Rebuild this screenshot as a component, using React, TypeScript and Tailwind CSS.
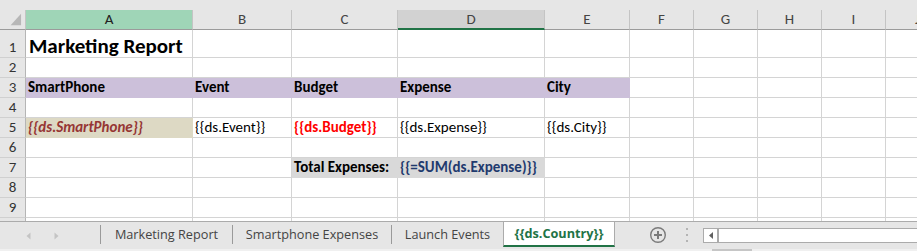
import clsx from "clsx";
import type { ReactNode } from "react";

type Col = { key: string; w: string; head: string };

const cols: Col[] = [
  { key: "A", w: "w-[167px]", head: "bg-[#9fd5b7] text-[#222]" },
  { key: "B", w: "w-[99px]", head: "text-[#444]" },
  { key: "C", w: "w-[106px]", head: "text-[#444]" },
  { key: "D", w: "w-[147px]", head: "bg-[#d2d2d2] border-b-2 border-b-[#217346] text-[#444]" },
  { key: "E", w: "w-[85px]", head: "text-[#444]" },
  { key: "F", w: "w-[64px]", head: "text-[#444]" },
  { key: "G", w: "w-[64px]", head: "text-[#444]" },
  { key: "H", w: "w-[64px]", head: "text-[#444]" },
  { key: "I", w: "w-[64px]", head: "text-[#444]" },
  { key: "J", w: "w-[64px]", head: "text-[#444]" },
];

type CellSpec = { text?: ReactNode; cls?: string; fill?: string };
type RowSpec = { n: number; h: string; cells: Record<string, CellSpec> };

const purple = "bg-[#ccc0da] border-[#ccc0da]";
const grey = "bg-[#d9d9d9] border-[#d9d9d9]";

const rows: RowSpec[] = [
  {
    n: 1,
    h: "h-[28px]",
    cells: { A: { text: "Marketing Report", cls: "text-[21px] font-bold pl-[3px] pb-[2px] text-black" } },
  },
  { n: 2, h: "h-[20px]", cells: {} },
  {
    n: 3,
    h: "h-[20px]",
    cells: {
      A: { text: "SmartPhone", cls: "font-bold text-black", fill: purple },
      B: { text: "Event", cls: "font-bold text-black", fill: purple },
      C: { text: "Budget", cls: "font-bold text-black", fill: purple },
      D: { text: "Expense", cls: "font-bold text-black", fill: purple },
      E: { text: "City", cls: "font-bold text-black", fill: purple },
    },
  },
  { n: 4, h: "h-[20px]", cells: {} },
  {
    n: 5,
    h: "h-[20px]",
    cells: {
      A: { text: "{{ds.SmartPhone}}", cls: "font-bold italic text-[#963634]", fill: "bg-[#ddd9c4] border-[#ddd9c4]" },
      B: { text: "{{ds.Event}}", cls: "text-black" },
      C: { text: "{{ds.Budget}}", cls: "font-bold text-[#ff0000]" },
      D: { text: "{{ds.Expense}}", cls: "text-black" },
      E: { text: "{{ds.City}}", cls: "text-black" },
    },
  },
  { n: 6, h: "h-[20px]", cells: {} },
  {
    n: 7,
    h: "h-[20px]",
    cells: {
      C: { text: "Total Expenses:", cls: "font-bold text-black", fill: grey },
      D: { text: "{{=SUM(ds.Expense)}}", cls: "font-bold text-[#1f3a6e]", fill: grey },
    },
  },
  { n: 8, h: "h-[20px]", cells: {} },
  { n: 9, h: "h-[20px]", cells: {} },
];

function Corner() {
  return (
    <div className="h-full w-[26px] shrink-0 border-r border-b border-r-[#c4c4c4] border-b-[#9b9b9b]">
      <svg aria-hidden="true" className="h-full w-full" viewBox="0 0 26 20">
        <path d="M22 4 L22 16 L11 16 Z" fill="#b7b7b7" />
      </svg>
    </div>
  );
}

function SheetRow({ row }: { row: RowSpec }) {
  return (
    <div className={clsx("flex shrink-0", row.h)}>
      <div className="flex w-[26px] shrink-0 items-end justify-center border-r border-b border-r-[#b5b5b5] border-b-[#d0d0d0] bg-[#e6e6e6] pb-[1px] text-[15px] leading-[18px] text-[#333]">
        {row.n}
      </div>
      {cols.map((c) => {
        const cell = row.cells[c.key];
        return (
          <div
            className={clsx(
              "flex shrink-0 items-end overflow-hidden whitespace-nowrap border-r border-b px-[2px] pb-[1px] text-[15px] leading-[18px]",
              c.w,
              cell?.fill ?? "border-[#d4d4d4] bg-white",
              cell?.cls,
            )}
            key={c.key}
          >
            {cell?.text}
          </div>
        );
      })}
    </div>
  );
}

function TabSep() {
  return <div className="mt-[3px] h-[19px] w-px shrink-0 bg-[#9a9a9a]" />;
}

function Tab({ label, w }: { label: string; w: string }) {
  return (
    <div className={clsx("flex h-[25px] shrink-0 items-center justify-center text-[12.7px] text-[#444]", w)}>{label}</div>
  );
}

export default function App() {
  return (
    <div className="flex h-[251px] w-[917px] flex-col overflow-hidden bg-[#e6e6e6] font-['Calibri','Carlito','Lato',sans-serif]">
      <div className="h-[10px] shrink-0" />
      <div className="flex h-[20px] shrink-0">
        <Corner />
        {cols.map((c) => (
          <div
            className={clsx(
              "flex shrink-0 items-center justify-center border-r border-b border-r-[#c4c4c4] border-b-[#9b9b9b] text-[15px]",
              c.w,
              c.head,
            )}
            key={c.key}
          >
            {c.key}
          </div>
        ))}
      </div>
      {rows.map((r) => (
        <SheetRow key={r.n} row={r} />
      ))}
      <div className="flex h-[3px] shrink-0">
        <div className="w-[26px] shrink-0 border-r border-r-[#b5b5b5] bg-[#e6e6e6]" />
        {cols.map((c) => (
          <div className={clsx("shrink-0 border-r border-[#d4d4d4] bg-white", c.w)} key={c.key} />
        ))}
      </div>

      <div className="flex h-[28px] shrink-0 border-t border-[#ababab] font-['Segoe_UI','Open_Sans',sans-serif]">
        <div className="flex w-[100px] shrink-0 items-center">
          <svg aria-hidden="true" className="ml-[26px] h-[8px] w-[5px]" viewBox="0 0 5 8">
            <path d="M4.5 0.5 L0.5 4 L4.5 7.5 Z" fill="#c4c4c4" />
          </svg>
          <svg aria-hidden="true" className="ml-[23px] h-[8px] w-[5px]" viewBox="0 0 5 8">
            <path d="M0.5 0.5 L4.5 4 L0.5 7.5 Z" fill="#c4c4c4" />
          </svg>
        </div>
        <TabSep />
        <Tab label="Marketing Report" w="w-[131px]" />
        <TabSep />
        <Tab label="Smartphone Expenses" w="w-[158px]" />
        <TabSep />
        <Tab label="Launch Events" w="w-[111px]" />
        <div className="flex h-[25px] w-[112px] shrink-0 items-center justify-center border-x border-b-2 border-x-[#ababab] border-b-[#217346] bg-white text-[12.7px] font-bold text-[#217346]">
          {"{{ds.Country}}"}
        </div>
        <div className="flex w-[70px] shrink-0 items-center">
          <svg aria-hidden="true" className="-mt-[2px] ml-[34px] h-[18px] w-[18px]" fill="none" viewBox="0 0 18 18">
            <circle cx="9" cy="9" r="7.3" stroke="#7b7b7b" strokeWidth="1.4" />
            <path d="M9 5 V13 M5 9 H13" stroke="#7b7b7b" strokeWidth="2" />
          </svg>
        </div>
        <div className="flex w-[4px] shrink-0 flex-col items-center justify-center gap-[4px] pb-[2px]">
          <span className="h-[2px] w-[2px] bg-[#b4b4b4]" />
          <span className="h-[2px] w-[2px] bg-[#b4b4b4]" />
          <span className="h-[2px] w-[2px] bg-[#b4b4b4]" />
        </div>
        <div className="ml-[14px] mt-[6px] flex h-[15px] flex-1 border border-r-0 border-[#ababab] bg-white">
          <div className="flex w-[15px] shrink-0 items-center justify-center border-r-2 border-[#ababab]">
            <svg aria-hidden="true" className="h-[7px] w-[4px]" viewBox="0 0 4 7">
              <path d="M4 0 L0 3.5 L4 7 Z" fill="#606060" />
            </svg>
          </div>
        </div>
      </div>
      <div className="flex h-[2px] shrink-0 bg-[#f0f0f0]">
        <div className="ml-[712px] h-full w-[40px] bg-[#c6c6c6]" />
      </div>
    </div>
  );
}
